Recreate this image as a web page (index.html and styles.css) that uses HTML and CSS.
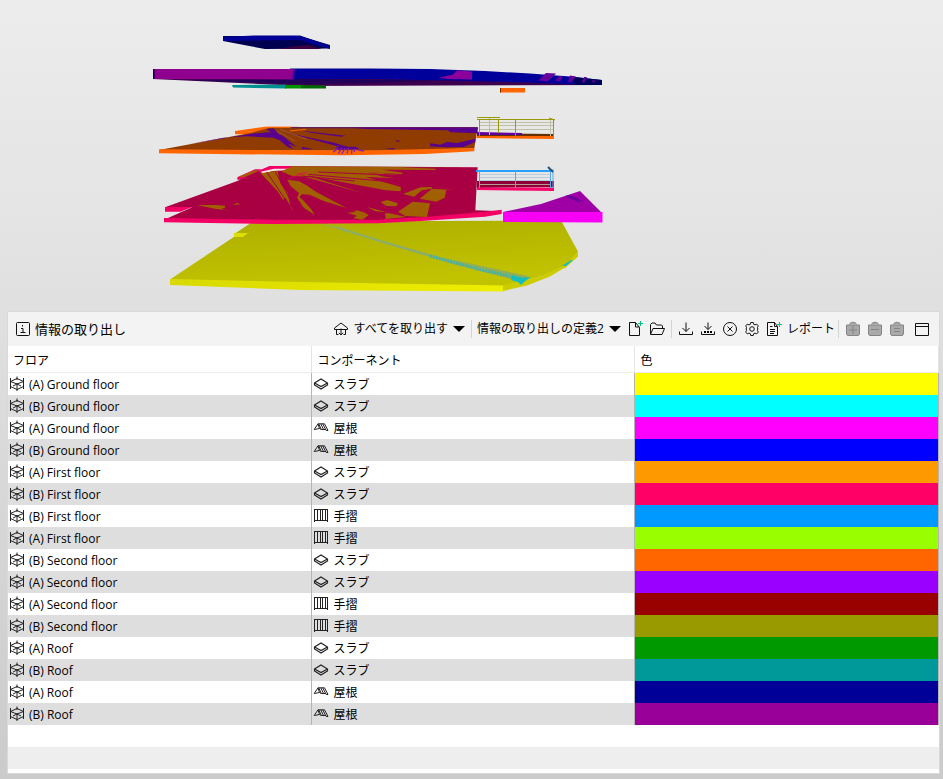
FILE: index.html
```html
<!DOCTYPE html>
<html lang="ja">
<head>
<meta charset="utf-8">
<meta name="viewport" content="width=device-width, initial-scale=1">
<title>情報の取り出し</title>
<link rel="stylesheet" href="styles.css">
</head>
<body>
<svg class="defs" aria-hidden="true">
  <symbol id="i-info" viewBox="0 0 16 16"><rect x="1.5" y="1.5" width="13" height="13" rx="1"/><path d="M7.500 4v1.500M6 7.500h2v4M5.500 11.500h5"/></symbol>
  <symbol id="i-home" viewBox="0 0 16 16"><path d="M1.500 7 8 2l6.500 5v1.500h-13zM3.500 8.500v5h2M12.500 8.500v5h-2M8 7.500v6.500M5.800 11.800 8 14l2.200-2.200"/></symbol>
  <symbol id="i-caret" viewBox="0 0 12 6"><path class="solid" d="M0 0h12L6 6z"/></symbol>
  <symbol id="i-new" viewBox="0 0 16 16"><path d="M8.500 1.500h-6v13h10v-8zv4.500h4"/><path class="plus" d="M13.500 0v5M11 2.500h5"/></symbol>
  <symbol id="i-open" viewBox="0 0 16 16"><path d="M1.500 13V3.500L3 2h3l1.500 2h5L13.500 5v2M1.500 13.500 4 7.500h11.500l-2.500 6z"/></symbol>
  <symbol id="i-down" viewBox="0 0 16 16"><path d="M8 1.500v9M4.500 7 8 10.500 11.500 7M1.500 10.500v3h13v-3"/></symbol>
  <symbol id="i-downdots" viewBox="0 0 16 16"><path d="M8 1.500v7M4.500 5 8 8.500 11.500 5M1.500 10.500v3h13v-3"/><path class="solid" d="M4 10h2v2H4zM7 10h2v2H7zM10 10h2v2h-2z"/></symbol>
  <symbol id="i-cancel" viewBox="0 0 16 16"><circle cx="8" cy="8" r="6.500"/><path d="m5.500 5.500 5 5M10.500 5.500l-5 5"/></symbol>
  <symbol id="i-gear" viewBox="0 0 16 16"><path d="M6.800 1.500h2.400l.5 1.800 1.300.6 1.700-.8 1.600 1.800-.8 1.600.3 1.500-.3 1.500.8 1.600-1.600 1.800-1.700-.8-1.300.6-.5 1.800H6.800l-.5-1.800-1.300-.6-1.700.8-1.600-1.800.8-1.600L2.200 8l.3-1.500-.8-1.600 1.600-1.800 1.700.8 1.300-.6z"/><circle cx="8" cy="8" r="2.300"/></symbol>
  <symbol id="i-report" viewBox="0 0 16 16"><path d="M8.500 1.500h-7v13h10v-9zv4h3M4 5.500h2.500M4 8.500h5M4 10.500h5M4 12.500h4"/><path class="plus" d="M13.500 1v5M11 3.500h5"/></symbol>
  <symbol id="i-bag-add" viewBox="0 0 16 16"><path class="bag" d="M4.500 3.500C5 .5 11 .5 11.500 3.500M1.500 4h13v9l-1 1.500h-11l-1-1.500z"/><path class="mark" d="M8 5v8M4 9h8"/></symbol>
  <symbol id="i-bag-sub" viewBox="0 0 16 16"><path class="bag" d="M4.500 3.500C5 .5 11 .5 11.500 3.500M1.500 4h13v9l-1 1.500h-11l-1-1.500z"/><path class="mark" d="M4 8.500h8"/></symbol>
  <symbol id="i-bag-eq" viewBox="0 0 16 16"><path class="bag" d="M4.500 3.500C5 .5 11 .5 11.500 3.500M1.500 4h13v9l-1 1.500h-11l-1-1.500z"/><path class="mark" d="M5 7.500h6M5 10.500h6"/></symbol>
  <symbol id="i-window" viewBox="0 0 16 16"><path d="M1.500 2.500h13v12h-13zM1.500 5.500h13"/></symbol>
  <symbol id="i-floor" viewBox="0 0 16 16"><path d="M1.500 2v11M14.500 2v11M8 .5V4M8 7v8M1.500 5.500 8 2.500l6.500 3M1.500 5.500 8 8l6.500-2.500M1.500 10.500 8 13.500l6.500-3M4 10l4-2 4 2"/></symbol>
  <symbol id="i-slab" viewBox="0 0 16 16"><path stroke-width="1.200" d="M1.500 7 8 3l6.500 4v2L8 13 1.500 9zL8 10.500l6.500-3.500"/></symbol>
  <symbol id="i-roof" viewBox="0 0 16 16"><path d="M1.200 9.500 5 3.800h6.500l3.500 6.700h-1.800L9.800 4M5 3.800 6.500 8.500 1.200 9.500M5.800 4 8.300 9.500M7.800 4l3 6M6.500 8.500l1.800 1h4.400"/></symbol>
  <symbol id="i-rail" viewBox="0 0 16 16"><path d="M1.500 1v13M14.500 1v13M1.500 1.500h13M1.500 12.500h13M4.500 2v11M7.500 2v11M9.500 2v11M12.500 2v11"/></symbol>
</svg>

<svg class="scene" viewBox="0 0 943 311" role="img" aria-label="3D">
  <defs>
    <linearGradient id="slab-top" x1="0" y1="0" x2="0.3" y2="1"><stop offset="0" stop-color="#adae00"/><stop offset="1" stop-color="#c2c300"/></linearGradient>
    <linearGradient id="slab-side"><stop offset="0" stop-color="#d8d900"/><stop offset="1" stop-color="#eeee00"/></linearGradient>
  </defs>
  <!-- upper roof -->
  <path fill="#000050" d="M223 41 265 49l65-.5V45l-30-9h-77z"/>
  <path fill="#000096" d="M223 37l31-1.500h46L330 46v3l-30-9-77 1z"/>
  <path fill="#3c0040" d="m278 49 18-3 12-1 14 4z"/>
  <!-- main roof -->
  <path fill="#3d004f" d="M153 79 250 83.500l50 2.500 302-1-20-5-290-3z"/>
  <path fill="#200058" d="m190 80 104-1 150 1.500-74 2.500-64 1-60-2z"/>
  <path fill="#00009a" d="M290 68.500h80l60 .5 55 2 45 2.500 40 3 32 3.500v5l-28-.5-44-2-80-2-80-1.500h-80z"/>
  <path fill="#90008e" d="M153 69h140v10.500l-140-.5z"/>
  <path fill="#00005c" d="M153 69h1.500v10H153zM574 77l28 3v5h-28z"/>
  <path fill="#52008e" d="m293 69 2 0-1 11h-2z"/>
  <path fill="#8c009c" d="m457 70.500 15 1v8l-24-.5-9-1.500 14-3z"/>
  <path fill="#65009c" d="m546 73 10 .5-8 8-10-1zM559 76l4 .5-3 5-5-.5zM570 75.500l6 1-5 6-3-1zM584 77l3 0-3 6-2-1zM592 80l4 1-3 2z"/>
  <path fill="#009090" d="m232 85 54-.5v4l-53-1z"/>
  <path fill="#009000" d="M285 85h16v3.500h-16z"/><path fill="#006800" d="m301 85 25 .5V88.500h-25z"/>
  <path fill="#ff6600" d="M500 88h25v4.500h-25z"/><path fill="#7b3200" d="M500 88h1v4.500h-1z"/>

  <!-- ground slab -->
  <path fill="url(#slab-top)" d="m170 279.500 66-44-1-2 18-12 308-1 17 31-12 16-26 9-38 10-132-.5z"/>
  <path fill="#dede00" d="M234 233h14l-5 4h-9z"/>
  <path fill="url(#slab-side)" d="M170 279l130 3 204 3.500v6L300 290l-130-5z"/>
  <path fill="#cccc00" d="m503 285.500 37-9 25-11 13-14v5l-10 9-18 11-23 9-24 5.500z"/>
  <path fill="#93ae55" d="m320 224 20 3 40 13 60 17 88 19-3 6-18-4-60-16-64-19-37-12z"/>
  <g fill="none" stroke-dasharray="2 1"><path stroke="#86ad78" stroke-width="2" d="m340 229 60 18 60 18 62 15"/><path stroke="#45b4a0" stroke-width="3" d="m430 256 52 14 42 9"/></g>
  <path fill="#10bdc0" d="m512 275 8 3 11-1-6 4-4 4-3-3-7-2zM571 260l2 0-7 6-4 0z"/>

  <!-- second floor and first floor, drawn on a grid three times as fine -->
  <g transform="translate(225 115) scale(.33333)">
    <path fill="#ff6600" d="M30 48 120 35h100v20L60 58H30z"/>
    <path fill="#903c00" d="M-198 105 80 53 140 37h618l-10 63-250 8z"/>
    <path fill="#632056" d="M200 36h558v6l-558-2z"/>
    <path fill="#59008f" d="m-110 88 190-32 50-4 40 8 25 20 20 16-70-28-80-4-70 4zM125 42l20-2 60 62-16-5zM178 52l150 31 50 16-30-2-80-22zM232 47l130 15-14 3-90-12zM380 38h378v17l-80-3-10-6-240-4zM616 85l30 4 20-8 30 3 55-13v10l-35 15-55 1-46-3zM480 101l25-2 5 5zM510 76l18 1-10 4zM332 96l60-1 12 8-68 1zM230 95l36 8h-35z"/>
    <path fill="#ff6600" d="m-198 103 520 3h130l296-7v10l-150 8-240 4-556-6z"/>
    <path fill="none" stroke="#8d22b0" stroke-width="4" d="m340 98-15 14M350 99l-10 17M360 101l-10 16M370 99l-4 17M380 103v14M388 101v10M400 105l17 3"/>
    <path fill="none" stroke="#ff6600" stroke-width="3" d="M95 45 125 37h70M195 48l48-5"/>
    <path fill="none" stroke="#ad6245" stroke-width="2" d="M155 48l55 30M165 43l80 30"/>

    <path fill="#ef0064" d="M37 187 90 163h20l-60 31H37z"/>
    <path fill="#a06000" d="m40 185 50-19 14 2-48 19z"/>
    <path fill="#a80043" d="M-180 277 37 198l63-30 35-15 623 4-7 129 60 2-30 6-180 14-140 9H147l-330-3 85-37z"/>
    <path fill="#f40065" d="M-180 276h82l-36 14h-46zM-183 309l330 5 313 0 140-8 180-16 50-6v13l-50 8-180 12-140 8-313 2-330-5zM100 168l35-15h65v9l-65 2-28 10z"/>
    <path fill="#f0e5e8" d="m107 170 40-9h52l-8 5-48 2-28 8z"/>
    <g fill="#a06000">
      <path d="m107 175 50-8 10 40 20 25 10 45 13 18-30-48-6 8-15-25zM187 194l35 5 22 12 30 20 90 48-70-22-40-18-23-1-8 7 13 12 22 25 12 18-33-21-21-31 6-14-25-20z"/>
      <path d="m202 154 550 3-240-1 120 5v4l-160-1 60 9v5l-120-8 70 16 30 4-90-4 105 30v13l-45-3-238-45 175 55-180-51-40-3-30-13z"/>
      <path d="m203 158 260 0 55 4-210-1 220 18-80-3-160-8-88-6z"/>
      <path d="m367 293 18-1 10-6 22 6 14 8-18 14-28-4 10-8zM425 276l38 10 22 6-33-3zM467 261l20-6 32 10-5 9-30-1zM480 295l10-1 54 12-62 6zM519 290l44-30 52 5-9 41-65-3zM534 237l52-20 36-1-2 5-28 5-12 8-12 11zM584 251l37-30 43 5-5 22-25 12z"/>
      <path d="M-84 270l56 0 28 2 0 6-12 4 30 5-45-5zM22 270l15-6 11 4zM623 222l62 2-50 2z"/>
    </g>
    <path fill="none" stroke="#a80043" stroke-width="3" d="m125 171 62 92M150 169l45 84M230 183l160 15M250 178l220 20M280 171l210 9"/>
    <path fill="none" stroke="#ef0064" stroke-width="2" d="m195 189 50-17M215 178l30-4"/>
  </g>

  <!-- upper balcony -->
  <path fill="#633000" d="m477 133 77 1v3h-77z"/><path fill="#61009a" d="m477 132 45 1v2h-45z"/><path fill="#ff6600" d="M477 136h77v3l-78-1z"/>
  <g fill="none" stroke="#c0c0a4"><path d="M479 122.500h74M479 125.500h74M479 129.500h74M489.500 118v17M550.500 119v17"/><path stroke="#99990a" d="M477 119.500h78M477 117.500h23M479.500 119v17M498.500 119v14M515.500 119v17M553.500 119v18M549 118l6 2"/></g>
  <!-- lower balcony -->
  <path fill="#8e0038" d="M477 181h77v6l-77 1z"/><path fill="#f8086a" d="M477 187.500h77v3.500l-77-1z"/>
  <path fill="none" stroke="#b69c8d" d="M480 184.500h70"/>
  <g fill="none" stroke="#b4cedd"><path d="M480 174.500h71M480 177.500h71M480 180.500h71"/><path stroke="#28a0ff" stroke-width="2" d="M476 171h77"/><path stroke="#57a8e8" d="M479.500 171v17M515.500 171v17M550.500 171v17M553 169v19"/><path stroke="#205078" stroke-width="2" d="m548 167 5 5"/></g>
  <!-- terrace roof -->
  <path fill="#9e00a5" d="m503 212 38-8 24-8 15-5 22 22z"/><path fill="#67009c" d="m565 196 4-1 17 7-8-2 2 3z"/>
  <path fill="#f800f5" d="M503 212h99.500v10.500L503 222z"/>
</svg>

<main class="panel">
  <header class="toolbar">
    <h1 class="title"><svg class="icon"><use href="#i-info"/></svg>情報の取り出し</h1>
    <div class="tools">
      <button class="tool wide" type="button"><svg class="icon"><use href="#i-home"/></svg><span>すべてを取り出す</span><svg class="caret"><use href="#i-caret"/></svg></button>
      <span class="sep"></span>
      <label class="picker"><select aria-label="定義"><option>情報の取り出しの定義2</option></select><svg class="caret"><use href="#i-caret"/></svg></label>
      <button class="tool" type="button" aria-label="新規"><svg class="icon"><use href="#i-new"/></svg></button>
      <button class="tool" type="button" aria-label="開く"><svg class="icon"><use href="#i-open"/></svg></button>
      <span class="sep"></span>
      <button class="tool" type="button" aria-label="保存"><svg class="icon"><use href="#i-down"/></svg></button>
      <button class="tool" type="button" aria-label="別名で保存"><svg class="icon"><use href="#i-downdots"/></svg></button>
      <button class="tool" type="button" aria-label="削除"><svg class="icon"><use href="#i-cancel"/></svg></button>
      <button class="tool" type="button" aria-label="設定"><svg class="icon"><use href="#i-gear"/></svg></button>
      <button class="tool wide report" type="button"><svg class="icon"><use href="#i-report"/></svg><span>レポート</span></button>
      <span class="sep"></span>
      <button class="tool" type="button" disabled aria-label="追加"><svg class="icon"><use href="#i-bag-add"/></svg></button>
      <button class="tool" type="button" disabled aria-label="除外"><svg class="icon"><use href="#i-bag-sub"/></svg></button>
      <button class="tool" type="button" disabled aria-label="設定"><svg class="icon"><use href="#i-bag-eq"/></svg></button>
      <button class="tool window" type="button" aria-label="ウィンドウ"><svg class="icon"><use href="#i-window"/></svg></button>
    </div>
  </header>
  <table class="grid">
    <thead><tr><th class="floor">フロア</th><th class="component">コンポーネント</th><th>色</th></tr></thead>
    <tbody id="rows"></tbody>
  </table>
  <div class="filler"></div>
</main>
<script src="rows.js"></script>
</body>
</html>
```
FILE: styles.css
```css
* { box-sizing: border-box; }

body {
  margin: 0;
  min-height: 100vh;
  background: linear-gradient(#ececec, #e5e5e5 25%, #cbcbcb);
  color: #000;
  font: 12px/22px "Open Sans", "Noto Sans CJK JP", sans-serif;
}

.defs { position: absolute; width: 0; height: 0; }
.scene { display: block; width: 100%; height: auto; }

.panel {
  margin: 0 3px 0 7px;
  border: 1px solid #d9d9d9;
  background: #fff;
}

.toolbar {
  display: flex;
  align-items: center;
  justify-content: space-between;
  height: 34px;
  padding: 0 6px 0 7px;
  background: #f3f3f3;
}

.title {
  display: flex;
  align-items: center;
  gap: 4px;
  margin: 0;
  font-size: 13px;
  font-weight: 400;
  white-space: nowrap;
}

.tools { display: flex; align-items: center; }

.icon {
  flex: none;
  width: 16px;
  height: 16px;
  fill: none;
  stroke: #111;
}

.caret { flex: none; width: 12px; height: 6px; }
.solid { fill: #000; stroke: none; }
.plus { stroke: #00c27a; }
.bag { fill: #a9a9a9; stroke: #858585; }
.mark { stroke: #858585; }

.tool {
  display: flex;
  align-items: center;
  justify-content: center;
  width: 22px;
  height: 22px;
  padding: 0;
  border: 0;
  background: none;
  color: inherit;
  font: inherit;
  white-space: nowrap;
}

.wide {
  justify-content: flex-start;
  gap: 5px;
  width: auto;
  padding: 0 3px;
}

.report { padding-right: 0; }
.window { margin-left: 3px; }

.sep {
  width: 1px;
  height: 18px;
  margin: 0 3px;
  background: #d4d4d4;
}

.picker {
  display: flex;
  align-items: center;
  gap: 5px;
  padding: 0 3px 0 2px;
}

.picker select {
  height: 22px;
  padding: 0;
  border: 0;
  appearance: none;
  background: none;
  color: inherit;
  font: inherit;
}

.grid {
  width: 100%;
  table-layout: fixed;
  border-collapse: separate;
  border-spacing: 0;
}

.grid th {
  height: 27px;
  padding: 4px 5px 0;
  border-right: 1px solid #e4e4e4;
  border-bottom: 1px solid #ececec;
  font-weight: 400;
  line-height: 20px;
  text-align: left;
}

.grid .floor { width: 32.7%; }
.grid .component { width: 34.7%; }

.grid td {
  height: 22px;
  padding: 0 1px;
  border-right: 1px solid #b5b5b5;
}

.grid tbody tr:nth-child(even) { background: #dedede; }

.cell {
  display: flex;
  align-items: center;
  gap: 4px;
  height: 22px;
}

.cell span { padding-top: 2px; line-height: 20px; }
.cell .icon { stroke: #222; }

.filler {
  height: 48px;
  background: linear-gradient(#fff 22px, #eee 22px, #eee 44px, #fff 44px);
}
```
FILE: rows.js
```js
const names = { slab: "スラブ", roof: "屋根", rail: "手摺" };
const rows = [
  ["(A) Ground floor", "slab", "#ffff00"],
  ["(B) Ground floor", "slab", "#00ffff"],
  ["(A) Ground floor", "roof", "#ff00ff"],
  ["(B) Ground floor", "roof", "#0000ff"],
  ["(A) First floor", "slab", "#ff9900"],
  ["(B) First floor", "slab", "#ff0066"],
  ["(B) First floor", "rail", "#0099ff"],
  ["(A) First floor", "rail", "#99ff00"],
  ["(B) Second floor", "slab", "#ff6600"],
  ["(A) Second floor", "slab", "#9900ff"],
  ["(A) Second floor", "rail", "#990000"],
  ["(B) Second floor", "rail", "#999900"],
  ["(A) Roof", "slab", "#009900"],
  ["(B) Roof", "slab", "#009999"],
  ["(A) Roof", "roof", "#000099"],
  ["(B) Roof", "roof", "#990099"]
];
const cell = (icon, text) =>
  `<td><div class="cell"><svg class="icon"><use href="#i-${icon}"/></svg><span>${text}</span></div></td>`;
document.getElementById("rows").innerHTML = rows
  .map(([floor, kind, color]) =>
    `<tr>${cell("floor", floor)}${cell(kind, names[kind])}<td style="background:${color}"></td></tr>`)
  .join("");
```
